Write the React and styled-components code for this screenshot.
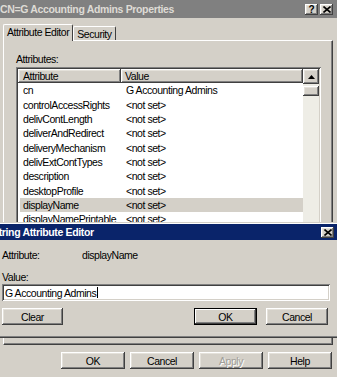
import React from 'react'
import styled, { createGlobalStyle, css } from 'styled-components'

const GlobalStyle = createGlobalStyle`
  html, body {
    margin: 0;
    padding: 0;
    background: #d4d0c8;
  }
  body {
    font-family: "Liberation Sans", Arial, sans-serif;
    font-size: 10px;
    letter-spacing: -0.45px;
    color: #000;
  }
`

const raised = css`
  box-shadow: inset -1px -1px #404040, inset 1px 1px #ffffff,
    inset -2px -2px #808080, inset 2px 2px #e4e1da;
`

const sunken = css`
  box-shadow: inset 1px 1px #808080, inset -1px -1px #ffffff,
    inset 2px 2px #404040, inset -2px -2px #d4d0c8;
`

const Window = styled.div`
  position: relative;
  width: 337px;
  height: 377px;
  overflow: hidden;
  background: #d4d0c8;
  display: flex;
  flex-direction: column;
`

const TitleBar = styled.div`
  flex: none;
  display: flex;
  align-items: center;
  justify-content: space-between;
  background: ${p => (p.$active ? '#0a246a' : '#808080')};
  color: ${p => (p.$active ? '#ffffff' : '#dedbd5')};
  padding: 0 ${p => p.$right}px 0 ${p => p.$left}px;
  height: ${p => p.$h}px;
`

const TitleText = styled.span`
  font-weight: bold;
  font-size: 10.5px;
  letter-spacing: -0.35px;
  white-space: nowrap;
`

const TitleButtons = styled.div`
  display: flex;
  gap: 2px;
`

const CaptionButton = styled.div`
  width: 13px;
  height: 11px;
  background: #d4d0c8;
  ${raised};
  display: flex;
  align-items: center;
  justify-content: center;
  color: #000;
  font-weight: bold;
  font-size: 10px;
  letter-spacing: 0;
`

const TabRow = styled.div`
  display: flex;
  align-items: flex-end;
  margin: 6px 0 0 3px;
  height: 16px;
  position: relative;
  z-index: 1;
`

const Tab = styled.div`
  height: ${p => (p.$selected ? 17 : 14)}px;
  margin-bottom: ${p => (p.$selected ? -1 : 0)}px;
  padding: 0 ${p => (p.$selected ? 3 : 3)}px;
  padding-bottom: ${p => (p.$selected ? 2 : 0)}px;
  background: #d4d0c8;
  border-top: 1px solid #ffffff;
  border-left: 1px solid #ffffff;
  border-right: 1px solid #404040;
  border-radius: 2px 2px 0 0;
  box-sizing: border-box;
  display: flex;
  align-items: center;
  font-size: 10.5px;
  white-space: nowrap;
`

const Panel = styled.div`
  margin-left: 3px;
  width: 330px;
  height: 305px;
  flex: none;
  box-sizing: border-box;
  border-top: 1px solid #ffffff;
  border-left: 1px solid #ffffff;
  border-right: 1px solid #404040;
  border-bottom: 1px solid #404040;
  box-shadow: inset -1px -1px #808080;
  padding: 12px 0 0 12px;
  overflow: hidden;
`

const Label = styled.div`
  line-height: 12px;
  height: 12px;
  font-size: 10.5px;
`

const ListBox = styled.div`
  margin-top: 2px;
  width: 305px;
  height: 176px;
  box-sizing: border-box;
  padding: 2px;
  background: #ffffff;
  ${sunken};
  display: flex;
`

const ListMain = styled.div`
  flex: 1;
  display: flex;
  flex-direction: column;
`

const HeaderRow = styled.div`
  display: grid;
  grid-template-columns: 103px 1fr;
  height: 15px;
`

const HeaderCell = styled.div`
  background: #d4d0c8;
  ${raised};
  padding-left: ${p => p.$pad}px;
  display: flex;
  align-items: center;
  font-size: 10.5px;
`

const Row = styled.div`
  display: grid;
  grid-template-columns: 103px 1fr;
  height: 14.33px;
  line-height: 14.33px;
  margin-left: 2px;
  padding-left: 3px;
  background: ${p => (p.$selected ? '#d4d0c8' : 'transparent')};
  white-space: nowrap;
  font-size: 10.5px;
`

const ScrollBar = styled.div`
  width: 16px;
  display: flex;
  flex-direction: column;
  gap: 2px;
  background: #eeede6;
`

const ScrollButton = styled.div`
  height: ${p => p.$h}px;
  background: #d4d0c8;
  ${raised};
  display: flex;
  align-items: center;
  justify-content: center;
`

const Footer = styled.div`
  display: flex;
  justify-content: flex-end;
  gap: 5px;
  margin-top: 7px;
  padding-right: 5px;
`

const Button = styled.div`
  width: ${p => p.$w || 64}px;
  height: 17px;
  box-sizing: border-box;
  background: #d4d0c8;
  ${p =>
    p.$default
      ? css`
          border: 1px solid #000;
          box-shadow: inset -1px -1px #404040, inset 1px 1px #ffffff,
            inset -2px -2px #808080;
        `
      : raised};
  display: flex;
  align-items: center;
  justify-content: center;
  font-size: 10.5px;
  color: ${p => (p.$disabled ? '#a09e98' : '#000')};
  text-shadow: ${p => (p.$disabled ? '1px 1px #ffffff' : 'none')};
`

const Dialog = styled.div`
  position: absolute;
  top: 222px;
  left: -12px;
  width: 352px;
  height: 116px;
  box-sizing: border-box;
  background: #d4d0c8;
  border-top: 1px solid #d4d0c8;
  border-left: 1px solid #d4d0c8;
  border-right: 1px solid #404040;
  border-bottom: 1px solid #404040;
  box-shadow: inset 1px 1px #ffffff, inset -1px -1px #808080;
  padding: 1px;
  display: flex;
  flex-direction: column;
`

const DialogBody = styled.div`
  padding: 9px 0 0 12px;
  display: flex;
  flex-direction: column;
`

const InfoRow = styled.div`
  display: grid;
  grid-template-columns: 80px 1fr;
  line-height: 12px;
  font-size: 10.5px;
  margin-bottom: ${p => p.$gap || 0}px;
`

const Input = styled.div`
  margin-top: 1px;
  width: 328px;
  height: 17px;
  box-sizing: border-box;
  background: #ffffff;
  ${sunken};
  padding-left: 3px;
  display: flex;
  align-items: center;
  font-size: 10.5px;
  white-space: nowrap;
`

const Caret = styled.span`
  display: inline-block;
  width: 1px;
  height: 11px;
  background: #000;
  margin-left: 1px;
`

const DialogButtons = styled.div`
  display: flex;
  margin-top: 7px;
  width: 326px;
  gap: 9px;
  & > :first-child {
    margin-right: auto;
  }
`

const attributes = [
  ['cn', 'G Accounting Admins'],
  ['controlAccessRights', '<not set>'],
  ['delivContLength', '<not set>'],
  ['deliverAndRedirect', '<not set>'],
  ['deliveryMechanism', '<not set>'],
  ['delivExtContTypes', '<not set>'],
  ['description', '<not set>'],
  ['desktopProfile', '<not set>'],
  ['displayName', '<not set>'],
  ['displayNamePrintable', '<not set>'],
  ['distinguishedName', 'CN=G Accounting Admins'],
]

function CloseGlyph() {
  return (
    <svg width="8" height="7" viewBox="0 0 8 7">
      <path d="M0.5 0.5 L7.5 6.5 M7.5 0.5 L0.5 6.5" stroke="#000" strokeWidth="1.6" />
    </svg>
  )
}

export default function App() {
  return (
    <>
      <GlobalStyle />
      <Window>
        <TitleBar $left={0} $right={4} $h={18}>
          <TitleText>CN=G Accounting Admins Properties</TitleText>
          <TitleButtons>
            <CaptionButton>?</CaptionButton>
            <CaptionButton>
              <CloseGlyph />
            </CaptionButton>
          </TitleButtons>
        </TitleBar>

        <TabRow>
          <Tab $selected>Attribute Editor</Tab>
          <Tab>Security</Tab>
        </TabRow>

        <Panel>
          <Label>Attributes:</Label>
          <ListBox>
            <ListMain>
              <HeaderRow>
                <HeaderCell $pad={5}>Attribute</HeaderCell>
                <HeaderCell $pad={4}>Value</HeaderCell>
              </HeaderRow>
              {attributes.map(([name, value]) => (
                <Row key={name} $selected={name === 'displayName'}>
                  <span>{name}</span>
                  <span>{value}</span>
                </Row>
              ))}
            </ListMain>
            <ScrollBar>
              <ScrollButton $h={15}>
                <svg width="7" height="4" viewBox="0 0 7 4">
                  <path d="M3.5 0 L7 4 L0 4 Z" fill="#000" />
                </svg>
              </ScrollButton>
              <ScrollButton $h={10} />
            </ScrollBar>
          </ListBox>
        </Panel>

        <Footer>
          <Button>OK</Button>
          <Button>Cancel</Button>
          <Button $disabled>Apply</Button>
          <Button>Help</Button>
        </Footer>

        <Dialog>
          <TitleBar $active $left={2} $right={4} $h={16}>
            <TitleText>String Attribute Editor</TitleText>
            <CaptionButton>
              <CloseGlyph />
            </CaptionButton>
          </TitleBar>
          <DialogBody>
            <InfoRow $gap={10}>
              <span>Attribute:</span>
              <span>displayName</span>
            </InfoRow>
            <InfoRow>
              <span>Value:</span>
            </InfoRow>
            <Input>
              G Accounting Admins
              <Caret />
            </Input>
            <DialogButtons>
              <Button $w={61}>Clear</Button>
              <Button $w={63} $default>OK</Button>
              <Button $w={62}>Cancel</Button>
            </DialogButtons>
          </DialogBody>
        </Dialog>
      </Window>
    </>
  )
}
